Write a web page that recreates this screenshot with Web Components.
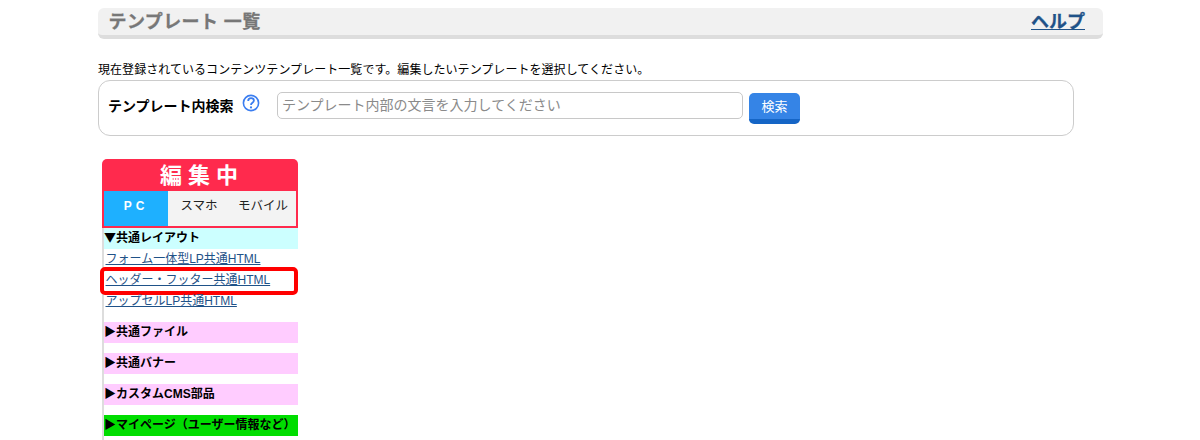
<!DOCTYPE html>
<html lang="ja">
<head>
<meta charset="utf-8">
<title>テンプレート一覧</title>
<style>
html, body { margin: 0; padding: 0; background: #fff; }
body { font-family: "Liberation Sans", "Noto Sans CJK JP", sans-serif; height: 440px; overflow: hidden; }
</style>
</head>
<body>
<template-page></template-page>

<script>
class TitleBar extends HTMLElement {
    connectedCallback() {
        this.attachShadow({ mode: "open" }).innerHTML = `<style>
:host { display: flex; justify-content: space-between; align-items: center; box-sizing: border-box;
  width: 1005px; height: 31px; padding: 2px 18px 0 10.5px; background: #f1f1f1;
  border-bottom: 4px solid #dddddd; border-radius: 6px; }
h1 { margin: 0; font-size: 18px; line-height: 25px; font-weight: bold; color: #777; letter-spacing: .4px; -webkit-text-stroke: .3px #777; }
a { font-size: 18px; line-height: 25px; font-weight: bold; color: #1f5288; text-decoration: underline; -webkit-text-stroke: .3px #1f5288; }
</style><h1><slot></slot></h1><a href="#">ヘルプ</a>`;
    }
}

class SearchBox extends HTMLElement {
    connectedCallback() {
        this.attachShadow({ mode: "open" }).innerHTML = `<style>
:host { display: flex; align-items: flex-start; box-sizing: border-box; width: 976px; height: 56px;
  padding: 11px 9px; border: 1px solid #cccccc; border-radius: 12px; background: #fff; }
b { font-size: 14px; line-height: 28px; color: #000; width: 134px; flex: none; }
svg { flex: none; margin: 2px 0 0 0; }
.input { flex: none; box-sizing: border-box; width: 466px; height: 27px; margin-left: 17px; padding-left: 4px;
  border: 1px solid #c8c8c8; border-radius: 5px; font-size: 14px; line-height: 25px; color: #8a8a8a; }
button { flex: none; width: 51px; height: 31px; margin: 1px 0 0 6px; padding: 0; border: 0;
  border-bottom: 5px solid #1565c6; border-radius: 5px; background: #3584e6; color: #fff;
  font: 13px/21px "Liberation Sans", "Noto Sans CJK JP", sans-serif; box-sizing: border-box; }
</style>
<b>テンプレート内検索</b>
<svg width="18" height="18" viewBox="0 0 18 18"><circle cx="9" cy="9" r="7.6" fill="none" stroke="#3a7df0" stroke-width="1.6"/><path d="M6.2 7c0-1.7 1.2-2.8 2.9-2.8s2.8 1 2.8 2.4c0 2.3-2.9 2-2.9 4.3" fill="none" stroke="#3a7df0" stroke-width="1.8"/><circle cx="9" cy="13.4" r="1.1" fill="#3a7df0"/></svg>
<div class="input">テンプレート内部の文言を入力してください</div>
<button>検索</button>`;
    }
}

class EditTabs extends HTMLElement {
    connectedCallback() {
        this.attachShadow({ mode: "open" }).innerHTML = `<style>
:host { display: block; box-sizing: border-box; width: 196px; height: 69px; background: #ff2a4d;
  border-radius: 5px 5px 0 0; padding: 0 2px 2px 2px; color: #fff; }
.head { height: 32px; padding-left: 4px; text-align: center; font-size: 22px; line-height: 34px; font-weight: bold; letter-spacing: 6px; }
.tabs { display: flex; height: 35px; background: #f3f3f3; font-size: 12.5px; line-height: 30px; color: #222; text-align: center; }
.tabs div { width: 62px; }
.tabs .on { width: 64px; background: #1eb0ff; color: #fff; font-weight: bold; font-size: 12px; letter-spacing: 4px; }
.tabs .last { width: 66px; }
</style>
<div class="head">編集中</div>
<div class="tabs"><div class="on">PC</div><div>スマホ</div><div class="last">モバイル</div></div>`;
    }
}

class FileGroup extends HTMLElement {
    connectedCallback() {
        const color = this.getAttribute("color") || "#ffccff";
        const arrow = this.getAttribute("arrow");
        this.attachShadow({ mode: "open" }).innerHTML = `<style>
:host { display: block; margin-bottom: 10px; }
.label { height: 21px; background: ${color}; font-size: 12px; line-height: 18px; font-weight: bold; color: #000; white-space: nowrap; }
.arrow { font-family: "Noto Sans CJK JP", sans-serif; }
</style><div class="label"><span class="arrow">${arrow}</span>${this.getAttribute("label")}</div><slot></slot>`;
    }
}

class FileLink extends HTMLElement {
    connectedCallback() {
        this.attachShadow({ mode: "open" }).innerHTML = `<style>
:host { display: block; height: 21px; padding-left: 1.5px; font-size: 12px; line-height: 20px; white-space: nowrap; }
a { color: #1f5288; text-decoration: underline; }
.mark { position: absolute; left: -5.5px; top: -3px; width: 198px; height: 28px; box-sizing: border-box;
  border: 4px solid #ff0000; border-radius: 5px; }
.wrap { position: relative; display: block; height: 21px; }
</style><span class="wrap"><a href="#"><slot></slot></a>${this.hasAttribute("marked") ? '<span class="mark"></span>' : ""}</span>`;
    }
}

class TemplatePage extends HTMLElement {
    connectedCallback() {
        this.attachShadow({ mode: "open" }).innerHTML = `<style>
:host { display: flex; flex-direction: column; box-sizing: border-box; width: 1200px; height: 440px;
  padding: 8px 0 0 98px; overflow: hidden; color: #000; }
.lead { margin: 22px 0 0; font-size: 12px; letter-spacing: .05px; line-height: 18px; height: 18px; white-space: nowrap; }
search-box { margin-top: 1px; }
aside { box-sizing: border-box; width: 196px; margin: 23px 0 0 4px; }
.list { border-left: 2px solid #dddddd; height: 212px; }
</style>
<title-bar>テンプレート 一覧</title-bar>
<p class="lead">現在登録されているコンテンツテンプレート一覧です。編集したいテンプレートを選択してください。</p>
<search-box></search-box>
<aside>
  <edit-tabs></edit-tabs>
  <div class="list">
    <file-group arrow="▼" label="共通レイアウト" color="#ccffff">
      <file-link>フォーム一体型LP共通HTML</file-link>
      <file-link marked>ヘッダー・フッター共通HTML</file-link>
      <file-link>アップセルLP共通HTML</file-link>
    </file-group>
    <file-group arrow="▶" label="共通ファイル"></file-group>
    <file-group arrow="▶" label="共通バナー"></file-group>
    <file-group arrow="▶" label="カスタムCMS部品"></file-group>
    <file-group arrow="▶" label="マイページ（ユーザー情報など）" color="#00dd00"></file-group>
  </div>
</aside>`;
    }
}

customElements.define("title-bar", TitleBar);
customElements.define("search-box", SearchBox);
customElements.define("edit-tabs", EditTabs);
customElements.define("file-group", FileGroup);
customElements.define("file-link", FileLink);
customElements.define("template-page", TemplatePage);
</script>
</body>
</html>
